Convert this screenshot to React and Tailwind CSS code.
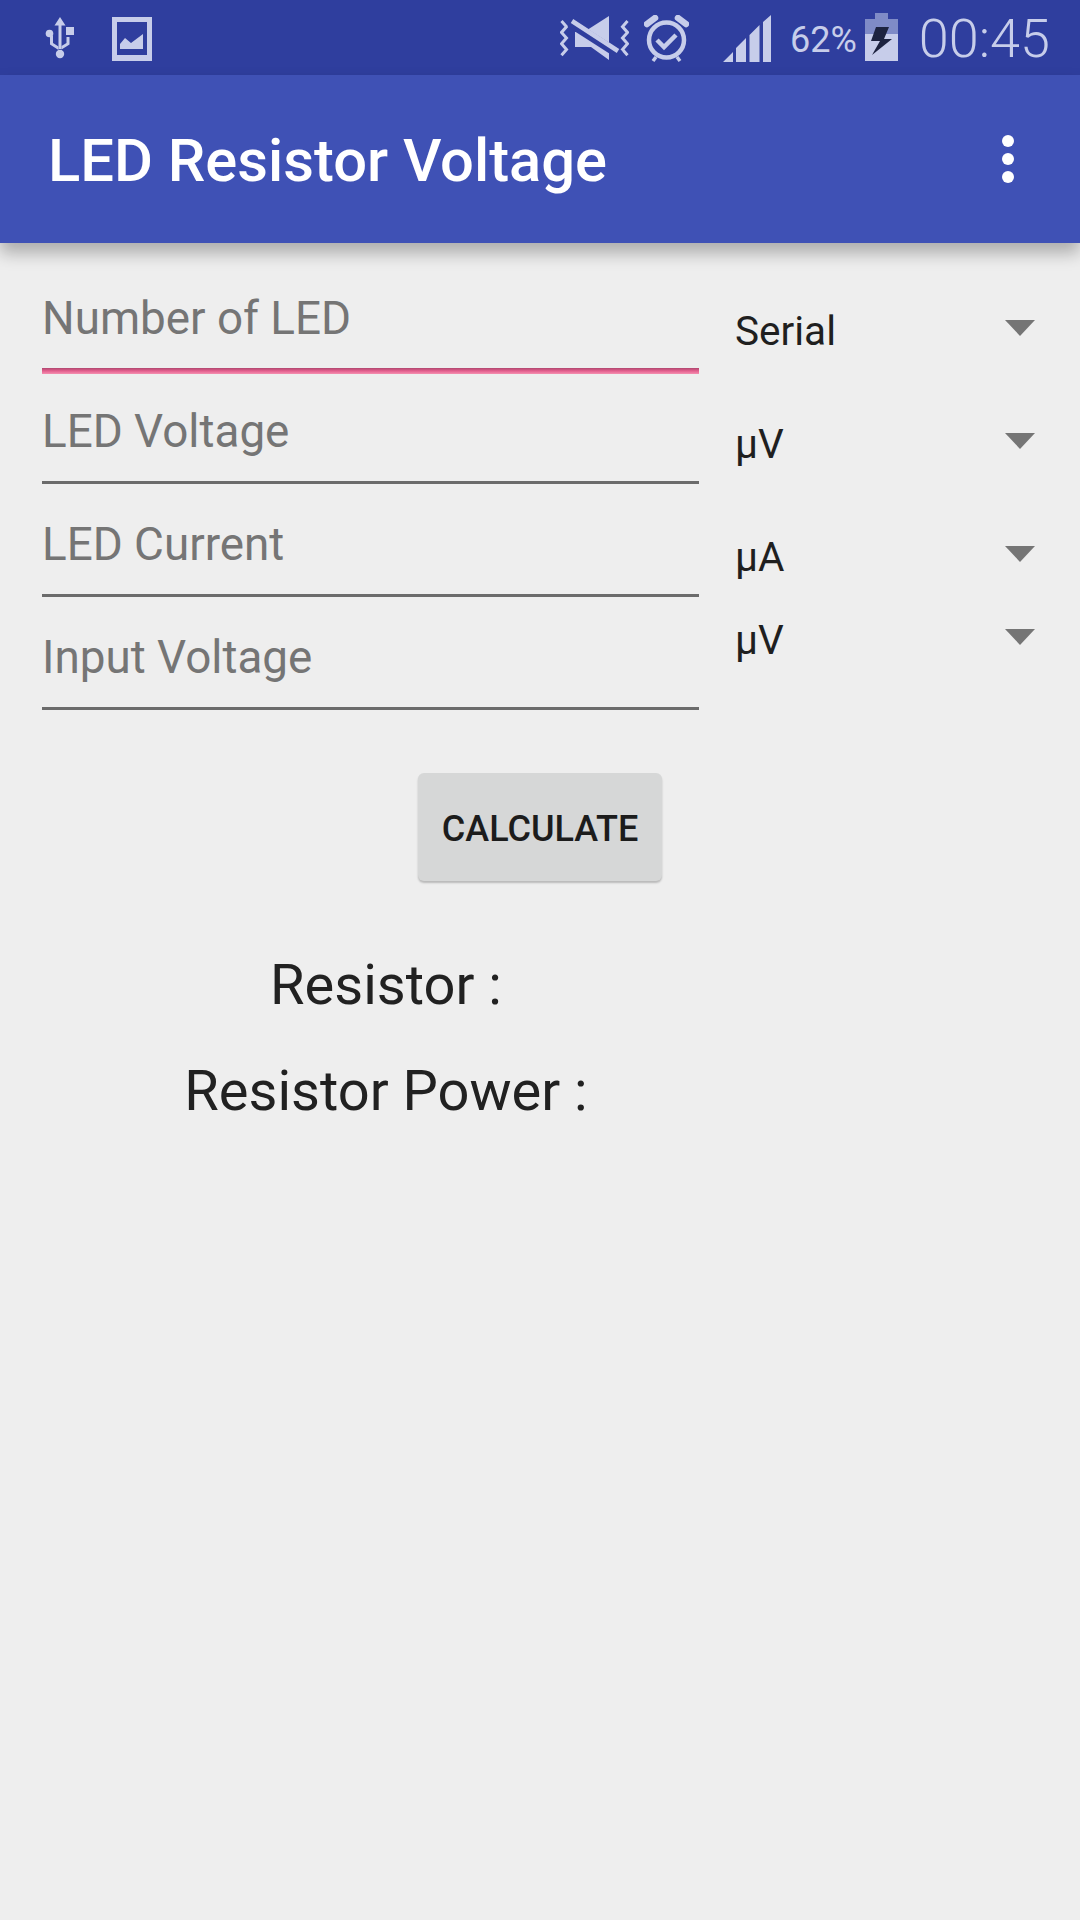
function Usb() {
  return (
    <svg width="30" height="44" viewBox="0 0 30 44" fill="#c7cdea" className="ml-[45px] mt-[16px]">
      <path d="M15 1l5.5 8.5h-4V33h-3V9.500h-4z" />
      <circle cx="15" cy="38" r="4.2" />
      <path d="M13.500 34l-8.500-5.500v-9h3v7.500l5.500 3.500zM16.500 30l5-3v-6h3v7.500l-8 5z" />
      <circle cx="4.500" cy="17.500" r="3.800" />
      <rect x="21" y="11" width="8" height="8" />
    </svg>
  );
}

function ImageIcon() {
  return (
    <svg width="40" height="44" viewBox="0 0 40 44" fill="#c7cdea" className="ml-[37px] mt-[17px]">
      <path fillRule="evenodd" d="M0 0h40v44H0zM5 5v33h30V5z" />
      <path d="M8 32v-5l5-6 6 5 12-9v15z" />
    </svg>
  );
}

function Muted() {
  return (
    <svg width="69" height="44" viewBox="0 0 69 44" fill="none" className="mt-[16px]">
      <path d="M1.500 5l5 5.700-5 5.700 5 5.700-5 5.700 5 5.700-5 5.700" stroke="#c7cdea" strokeWidth="3" />
      <path d="M67.500 5l-5 5.700 5 5.700-5 5.700 5 5.700-5 5.700 5 5.700" stroke="#c7cdea" strokeWidth="3" />
      <path d="M49 0v44L31 31H15V16h9z" fill="#c7cdea" />
      <path d="M10 7l50 32" stroke="#2f3e9e" strokeWidth="9" />
      <path d="M12 5l46 30" stroke="#c7cdea" strokeWidth="4.500" />
    </svg>
  );
}

function Alarm() {
  return (
    <svg width="45" height="48" viewBox="0 0 45 48" fill="none" className="ml-[15px] mt-[15px]">
      <circle cx="22.500" cy="25" r="17.500" stroke="#c7cdea" strokeWidth="4.500" />
      <path d="M13 25l7 7 12-12" stroke="#c7cdea" strokeWidth="4.500" />
      <path d="M3 9l8-6M42 9l-8-6" stroke="#c7cdea" strokeWidth="6.500" strokeLinecap="round" />
      <path d="M9 46l3-4M36 46l-3-4" stroke="#c7cdea" strokeWidth="3.500" />
    </svg>
  );
}

function Signal() {
  return (
    <svg width="48" height="47" viewBox="0 0 48 47" fill="#c7cdea" className="ml-[34px] mt-[15px]">
      <path d="M0 47L10 37v10zM13 47V33l10-10v24zM26.500 47V20l10-10v37zM40 47V7l8-7v47z" />
    </svg>
  );
}

function Battery() {
  return (
    <svg width="33" height="48" viewBox="0 0 33 48" className="ml-[8px] mt-[13px]">
      <path d="M10 0h13v6h10v15H0V6h10z" fill="#7f8bc7" />
      <path d="M0 21h33v27H0z" fill="#c7cdea" />
      <path d="M11 14h13l-5 12h8L7 42l8-14H6z" fill="#1d2340" />
    </svg>
  );
}

function Arrow() {
  return <svg width="30" height="16" viewBox="0 0 30 16" fill="#757575" className="shrink-0"><path d="M0 0h30L15 16z" /></svg>;
}

function Field({ label, accent }) {
  return (
    <div className="h-[113px] w-[657px] flex flex-col justify-end">
      <div className="text-[45.800px] leading-[60px] text-[#757575] mb-[19px]">{label}</div>
      {accent ? (
        <div className="h-[6px] bg-gradient-to-b from-[#b0476f] via-[#e4608f] to-[#f48fb1]" />
      ) : (
        <div className="h-[3px] bg-[#6b6b6b] mb-[3px]" />
      )}
    </div>
  );
}

function Spinner({ label, height }) {
  return (
    <div className={`flex items-start justify-between pl-[36px] pr-[45px] ${height}`}>
      <span className="text-[40.500px] leading-[48px] text-[#1f1f1f]">{label}</span>
      <span className="mt-[13px]"><Arrow /></span>
    </div>
  );
}

export default function App() {
  return (
    <div className="w-[1080px] h-[1920px] bg-[#eeeeee] overflow-hidden font-['Roboto',sans-serif]">
      <div className="h-[75px] bg-[#2f3e9e] flex">
        <Usb />
        <ImageIcon />
        <div className="flex-1" />
        <Muted />
        <Alarm />
        <Signal />
        <span className="ml-[19px] mt-[18px] text-[36px] leading-[44px] text-[#c7cdea]">62%</span>
        <Battery />
        <span className="ml-[21px] mr-[30px] mt-[9px] text-[54px] leading-[60px] font-light text-[#c7cdea]">00:45</span>
      </div>
      <div className="h-[168px] bg-[#3f51b5] flex items-center justify-between pl-[48px] pr-[66px] shadow-[0_10px_16px_rgba(0,0,0,0.28)] relative">
        <h1 className="text-[59.700px] leading-[72px] font-medium text-white mt-[4px]">LED Resistor Voltage</h1>
        <div className="flex flex-col gap-[6px]">
          <div className="w-[12px] h-[12px] rounded-full bg-white" />
          <div className="w-[12px] h-[12px] rounded-full bg-white" />
          <div className="w-[12px] h-[12px] rounded-full bg-white" />
        </div>
      </div>
      <div className="flex pl-[42px] mt-[18px]">
        <div className="flex flex-col">
          <Field label="Number of LED" accent />
          <Field label="LED Voltage" />
          <Field label="LED Current" />
          <Field label="Input Voltage" />
        </div>
        <div className="flex-1 pt-[46px]">
          <Spinner label="Serial" height="h-[113px]" />
          <Spinner label="µV" height="h-[113px]" />
          <Spinner label="µA" height="h-[83px]" />
          <Spinner label="µV" height="h-[82px]" />
        </div>
      </div>
      <div className="w-[772px] flex flex-col items-center">
        <button className="ml-[308px] mt-[60px] w-[244px] h-[108px] pt-[3px] rounded-[6px] bg-[#d6d7d7] shadow-[0_2px_2px_rgba(0,0,0,0.22)] text-[36px] font-medium text-[#1c1c1c]">CALCULATE</button>
        <div className="mt-[68px] text-[56px] leading-[72px] text-[#212121]">Resistor :</div>
        <div className="mt-[34px] text-[56px] leading-[72px] text-[#212121]">Resistor Power :</div>
      </div>
    </div>
  );
}
